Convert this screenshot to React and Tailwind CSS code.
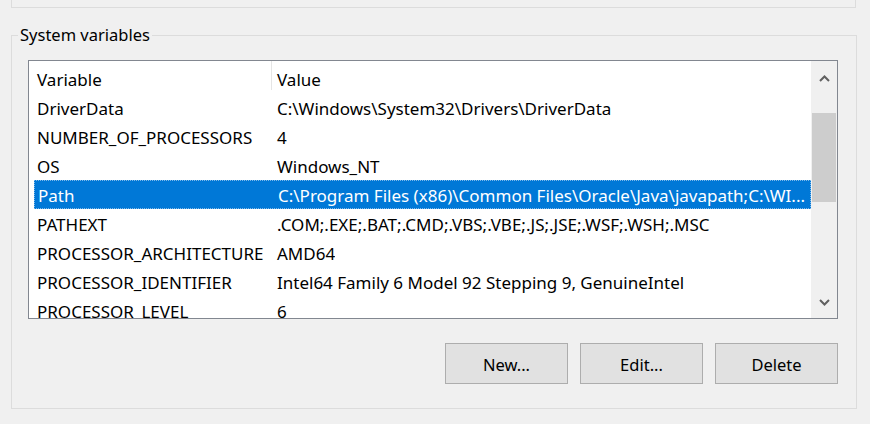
import React from 'react';

const rows = [
  ['DriverData', 'C:\\Windows\\System32\\Drivers\\DriverData'],
  ['NUMBER_OF_PROCESSORS', '4'],
  ['OS', 'Windows_NT'],
  ['Path', 'C:\\Program Files (x86)\\Common Files\\Oracle\\Java\\javapath;C:\\WI...'],
  ['PATHEXT', '.COM;.EXE;.BAT;.CMD;.VBS;.VBE;.JS;.JSE;.WSF;.WSH;.MSC'],
  ['PROCESSOR_ARCHITECTURE', 'AMD64'],
  ['PROCESSOR_IDENTIFIER', 'Intel64 Family 6 Model 92 Stepping 9, GenuineIntel'],
  ['PROCESSOR_LEVEL', '6'],
];

const font = { fontFamily: '"Segoe UI", "Noto Sans", sans-serif' };

function Chevron({ up }) {
  return (
    <svg width="11" height="7" viewBox="0 0 11 7">
      <path
        d={up ? 'M1 6 L5.5 1.5 L10 6' : 'M1 1 L5.5 5.5 L10 1'}
        fill="none"
        stroke="#606060"
        strokeWidth="2"
      />
    </svg>
  );
}

function WinButton({ children }) {
  return (
    <button className="w-[123px] h-[41px] pt-[3px] bg-[#e1e1e1] border border-[#adadad] text-[16.5px] text-black">
      {children}
    </button>
  );
}

export default function App() {
  return (
    <div
      className="w-[870px] h-[424px] bg-[#f0f0f0] overflow-hidden pl-[11px] pr-[14px] text-[16px] text-black"
      style={font}
    >
      <div className="h-[8px] border-x border-b border-[#dcdcdc]" />

      <fieldset className="mt-[16px] border border-[#dcdcdc] pl-[6px] pr-[18px] pb-[24px] pt-[14px]">
        <legend className="px-[2px] leading-[22px] text-[16.5px]">System variables</legend>

        <div className="pl-[10px]">
          <div className="w-[810px] h-[259px] border border-[#828790] bg-white flex overflow-hidden text-[17px]">
            <div className="flex-1 flex flex-col overflow-hidden">
              <div className="h-[32px] shrink-0 flex items-center">
                <div className="w-[242px] pl-[8px] pt-[5px]">Variable</div>
                <div className="w-px h-[29px] self-start bg-[#e5e5e5]" />
                <div className="pl-[5px] pt-[5px]">Value</div>
              </div>
              {rows.map(([name, value]) => {
                const sel = name === 'Path';
                return (
                  <div
                    key={name}
                    className={
                      'ml-[5px] h-[29px] shrink-0 flex items-center whitespace-nowrap pt-[2px] ' +
                      (sel ? 'bg-[#0078d7] text-white border border-dotted border-[#7fb9ea]' : '')
                    }
                  >
                    <div className="w-[237px] pl-[3px] shrink-0">{name}</div>
                    <div className="pl-[6px] overflow-hidden">{value}</div>
                  </div>
                );
              })}
            </div>

            <div className="w-[26px] shrink-0 bg-[#f0f0f0] flex flex-col">
              <div className="h-[33px] flex items-center justify-center pt-[2px]">
                <Chevron up />
              </div>
              <div className="mt-[19px] h-[89px] bg-[#cdcdcd] mx-px" />
              <div className="flex-1" />
              <div className="h-[32px] flex items-center justify-center">
                <Chevron />
              </div>
            </div>
          </div>

          <div className="mt-[24px] flex justify-end gap-[12px]">
            <WinButton>New...</WinButton>
            <WinButton>Edit...</WinButton>
            <WinButton>Delete</WinButton>
          </div>
        </div>
      </fieldset>
    </div>
  );
}
